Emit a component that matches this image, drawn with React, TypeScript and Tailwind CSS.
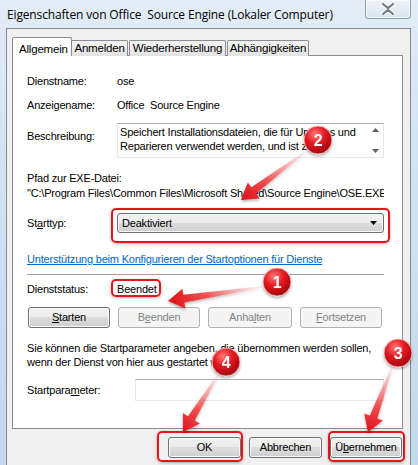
import React from "react";

const font = { fontFamily: '"Liberation Sans", Arial, sans-serif', letterSpacing: "-0.2px" };

function Btn({ children, w, disabled }: { children: React.ReactNode; w: string; disabled?: boolean }) {
  return (
    <div
      className={
        disabled
          ? `${w} h-[21px] rounded-[3px] border border-[#adb2b5] bg-[#f4f4f4] text-[#838383] flex items-center justify-center text-[11px]`
          : `${w} h-[21px] rounded-[3px] border border-[#707070] bg-[linear-gradient(180deg,#f2f2f2_0%,#ebebeb_50%,#dddddd_50%,#cfcfcf_100%)] shadow-[inset_0_0_0_1px_#fbfbfb] text-black flex items-center justify-center text-[11px]`
      }
    >
      {children}
    </div>
  );
}

function Overlay() {
  const arrows = [
    { t: [305, 152], h: [241, 200], id: "a2" },
    { t: [262, 287], h: [168, 301], id: "a1" },
    { t: [218, 375], h: [183, 432], id: "a4" },
    { t: [392, 367], h: [368, 432], id: "a3" },
  ];
  const circles = [
    { x: 318, y: 140, n: "2" },
    { x: 277, y: 282, n: "1" },
    { x: 226, y: 362, n: "4" },
    { x: 398, y: 353, n: "3" },
  ];
  return (
    <svg className="absolute left-0 top-0 pointer-events-none" width="418" height="465" viewBox="0 0 418 465">
      <defs>
        <radialGradient id="cg" cx="40%" cy="30%" r="70%">
          <stop offset="0%" stopColor="#ff7a7a" />
          <stop offset="50%" stopColor="#e3161e" />
          <stop offset="100%" stopColor="#a00a10" />
        </radialGradient>
        {arrows.map((a) => (
          <linearGradient
            key={a.id}
            id={a.id}
            gradientUnits="userSpaceOnUse"
            x1={a.t[0]}
            y1={a.t[1]}
            x2={a.h[0]}
            y2={a.h[1]}
          >
            <stop offset="0%" stopColor="#ffb0b0" stopOpacity="0.2" />
            <stop offset="60%" stopColor="#f03a3a" stopOpacity="0.85" />
            <stop offset="100%" stopColor="#e0101a" />
          </linearGradient>
        ))}
        <filter id="sh" x="-30%" y="-30%" width="160%" height="160%">
          <feDropShadow dx="0" dy="1.5" stdDeviation="1.5" floodColor="#000" floodOpacity="0.35" />
        </filter>
      </defs>
      {arrows.map((a) => {
        const [tx, ty] = a.t;
        const [hx, hy] = a.h;
        const dx = hx - tx;
        const dy = hy - ty;
        const L = Math.hypot(dx, dy);
        const ux = dx / L;
        const uy = dy / L;
        const px = -uy;
        const py = ux;
        const headLen = 16;
        const bx = hx - ux * headLen;
        const by = hy - uy * headLen;
        const sw = 4;
        const hw = 10;
        const pts = [
          [tx + px * 0.8, ty + py * 0.8],
          [bx + px * sw, by + py * sw],
          [bx + px * hw, by + py * hw],
          [hx, hy],
          [bx - px * hw, by - py * hw],
          [bx - px * sw, by - py * sw],
          [tx - px * 0.8, ty - py * 0.8],
        ]
          .map((p) => p.map((v) => v.toFixed(1)).join(","))
          .join(" ");
        return <polygon key={a.id} points={pts} fill={`url(#${a.id})`} filter="url(#sh)" />;
      })}
      {circles.map((c) => (
        <g key={c.n} filter="url(#sh)">
          <circle cx={c.x} cy={c.y} r="14" fill="url(#cg)" stroke="#ffd0d0" strokeWidth="0.8" />
          <text
            x={c.x}
            y={c.y + 5.5}
            textAnchor="middle"
            fill="#fff"
            fontSize="16"
            fontWeight="bold"
            fontFamily='"Liberation Sans", Arial, sans-serif'
          >
            {c.n}
          </text>
        </g>
      ))}
    </svg>
  );
}

export default function App() {
  const hl = "absolute rounded-[5px] border-2 border-[#e8141c] shadow-[0_1px_3px_rgba(0,0,0,0.3)] pointer-events-none";
  return (
    <div
      className="relative w-[418px] h-[465px] overflow-hidden bg-[linear-gradient(180deg,#e3edf7_0%,#d3e3f3_30%,#c4d9ee_100%)] flex flex-col"
      style={font}
    >
      {/* title bar */}
      <div className="h-[28px] flex items-start shrink-0 relative">
        <div
          className="pl-[7px] pt-[6px] text-[12px] text-black whitespace-pre tracking-[-0.15px]"
          style={{ fontFamily: '"Open Sans", "Liberation Sans", sans-serif' }}
        >
          Eigenschaften von Office  Source Engine (Lokaler Computer)
        </div>
        <div className="absolute left-[365px] top-0 w-[46px] h-[19px] rounded-b-[4px] border border-t-0 border-[#8d9fb3] bg-[linear-gradient(180deg,#eef4fa,#dbe6f1)] flex items-center justify-center shadow-[inset_0_0_0_1px_rgba(255,255,255,0.6)]">
          <svg width="14" height="12" viewBox="0 0 14 12">
            <path d="M2 1 L7 5 L12 1 M2 11 L7 7 L12 11" stroke="#fff" strokeWidth="4.2" fill="none" strokeLinecap="round" />
            <path d="M2 1 L7 5 L12 1 M2 11 L7 7 L12 11" stroke="#707a86" strokeWidth="2.2" fill="none" strokeLinecap="round" />
          </svg>
        </div>
      </div>

      {/* client area */}
      <div className="ml-[6px] mr-[7px] flex-1 border border-b-0 border-[#838a94] bg-[#f0f0f0] pt-[8px] pl-[5px] pr-[7px] flex flex-col">
        {/* tabs */}
        <div className="flex items-end h-[19px] relative z-10">
          <div className="w-[60px] h-[19px] border border-b-0 border-[#898c95] rounded-t-[2px] bg-white text-[11.5px] pl-[6px] pt-[3px]">
            Allgemein
          </div>
          <div className="w-[56px] h-[16px] border border-b-0 border-l-0 border-[#898c95] rounded-tr-[2px] bg-[linear-gradient(180deg,#f3f3f3,#e3e3e3)] text-[11.5px] flex items-center justify-center">
            Anmelden
          </div>
          <div className="ml-[1px] w-[97px] h-[16px] border border-b-0 border-[#898c95] rounded-t-[2px] bg-[linear-gradient(180deg,#f3f3f3,#e3e3e3)] text-[11.5px] flex items-center justify-center">
            Wiederherstellung
          </div>
          <div className="ml-[1px] w-[82px] h-[16px] border border-b-0 border-[#898c95] rounded-t-[2px] bg-[linear-gradient(180deg,#f3f3f3,#e3e3e3)] text-[11.5px] flex items-center justify-center">
            Abhängigkeiten
          </div>
        </div>

        {/* panel */}
        <div className="-mt-px h-[374px] border border-[#898c95] bg-white pl-[14px] pr-[18px] flex flex-col text-[11px] text-black">
          <div className="mt-[17px] h-[16px] flex items-center">
            <div className="w-[90px]">Dienstname:</div>
            <div>ose</div>
          </div>
          <div className="mt-[8px] h-[16px] flex items-center">
            <div className="w-[90px]">Anzeigename:</div>
            <div className="whitespace-pre">Office  Source Engine</div>
          </div>
          <div className="mt-[10px] h-[35px] flex">
            <div className="w-[90px] pt-[5px]">Beschreibung:</div>
            <div className="flex-1 border border-[#e3e9ef] border-t-[#abadb3] flex">
              <div className="flex-1 pl-[2px] pt-[1px] leading-[14px] overflow-hidden whitespace-nowrap">
                Speichert Installationsdateien, die für Updates und
                <br />
                Reparieren verwendet werden, und ist zum
              </div>
              <div className="w-[16px] flex flex-col justify-between items-center py-[4px]">
                <svg width="7" height="4" viewBox="0 0 7 4">
                  <path d="M0 4 L3.5 0 L7 4 Z" fill="#606060" />
                </svg>
                <svg width="7" height="4" viewBox="0 0 7 4">
                  <path d="M0 0 L3.5 4 L7 0 Z" fill="#606060" />
                </svg>
              </div>
            </div>
          </div>
          <div className="mt-[13px] h-[14px] leading-[14px]">Pfad zur EXE-Datei:</div>
          <div className="mt-[1px] h-[14px] leading-[14px] whitespace-nowrap overflow-hidden">
            {'"C:\\Program Files\\Common Files\\Microsoft Shared\\Source Engine\\OSE.EXE"'}
          </div>
          <div className="mt-[13px] h-[20px] flex items-center">
            <div className="w-[90px]">
              St<span className="underline">a</span>rttyp:
            </div>
            <div className="flex-1 h-[20px] rounded-[3px] border border-[#707070] bg-[linear-gradient(180deg,#f2f2f2_0%,#ebebeb_50%,#dddddd_50%,#cfcfcf_100%)] shadow-[inset_0_0_0_1px_#fbfbfb] flex items-center pl-[4px] pr-[6px]">
              <div className="flex-1">Deaktiviert</div>
              <svg width="7" height="4" viewBox="0 0 7 4">
                <path d="M0 0 L3.5 4 L7 0 Z" fill="#000" />
              </svg>
            </div>
          </div>
          <div className="mt-[19px] h-[14px] leading-[14px] text-[#0066cc] underline whitespace-nowrap">
            Unterstützung beim Konfigurieren der Startoptionen für Dienste
          </div>
          <div className="mt-[8px] h-px bg-[#a0a0a0]" />
          <div className="mt-[6px] h-[16px] flex items-center">
            <div className="w-[90px]">Dienststatus:</div>
            <div>Beendet</div>
          </div>
          <div className="mt-[10px] flex gap-[8px] pl-[1px]">
            <Btn w="w-[82px]">
              <span className="underline">S</span>tarten
            </Btn>
            <Btn w="w-[82px]" disabled>
              B<span className="underline">e</span>enden
            </Btn>
            <Btn w="w-[84px]" disabled>
              Anha<span className="underline">l</span>ten
            </Btn>
            <Btn w="w-[82px]" disabled>
              <span className="underline">F</span>ortsetzen
            </Btn>
          </div>
          <div className="mt-[13px] leading-[14px] whitespace-nowrap">
            Sie können die Startparameter angeben, die übernommen werden sollen,
            <br />
            wenn der Dienst von hier aus gestartet wird.
          </div>
          <div className="mt-[10px] h-[22px] flex items-center">
            <div className="w-[108px]">
              Startpara<span className="underline">m</span>eter:
            </div>
            <div className="flex-1 h-[22px] border border-[#e3e9ef] border-t-[#abadb3] bg-white" />
          </div>
        </div>

        {/* dialog buttons */}
        <div className="mt-[8px] flex justify-end gap-[8px] pr-[1px]">
          <Btn w="w-[73px]">OK</Btn>
          <Btn w="w-[73px]">Abbrechen</Btn>
          <Btn w="w-[72px]">
            Ü<span className="underline">b</span>ernehmen
          </Btn>
        </div>
      </div>

      {/* highlights */}
      <div className={hl} style={{ left: 111, top: 208, width: 279, height: 35 }} />
      <div className={hl} style={{ left: 111, top: 279, width: 50, height: 18 }} />
      <div className={hl} style={{ left: 157, top: 431, width: 86, height: 31 }} />
      <div className={hl} style={{ left: 328, top: 431, width: 77, height: 31 }} />

      <Overlay />
    </div>
  );
}
